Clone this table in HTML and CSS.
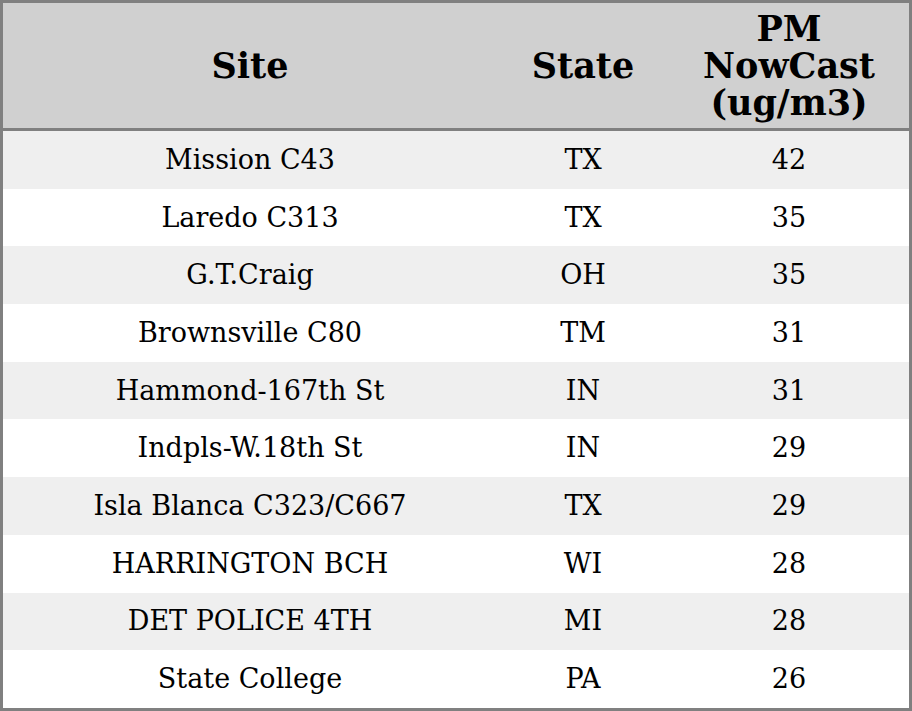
FILE: index.html
```html
<!DOCTYPE html>
<html>
<head>
<meta charset="utf-8">
<link rel="stylesheet" href="styles.css">
</head>
<body>
<table class="aq">
<thead>
<tr><th class="c-site">Site</th><th class="c-state">State</th><th class="c-pm">PM<br>NowCast<br>(ug/m3)</th></tr>
</thead>
<tbody>
<tr><td>Mission C43</td><td>TX</td><td>42</td></tr>
<tr><td>Laredo C313</td><td>TX</td><td>35</td></tr>
<tr><td>G.T.Craig</td><td>OH</td><td>35</td></tr>
<tr><td>Brownsville C80</td><td>TM</td><td>31</td></tr>
<tr><td>Hammond-167th St</td><td>IN</td><td>31</td></tr>
<tr><td>Indpls-W.18th St</td><td>IN</td><td>29</td></tr>
<tr><td>Isla Blanca C323/C667</td><td>TX</td><td>29</td></tr>
<tr><td>HARRINGTON BCH</td><td>WI</td><td>28</td></tr>
<tr><td>DET POLICE 4TH</td><td>MI</td><td>28</td></tr>
<tr><td>State College</td><td>PA</td><td>26</td></tr>
</tbody>
</table>
</body>
</html>
```
FILE: styles.css
```css
html, body { margin: 0; padding: 0; background: #fff; }
body { font-family: "DejaVu Serif", serif; color: #000; }
.aq {
  width: 912px;
  height: 711px;
  border-collapse: collapse;
  border: 3px solid #808080;
  table-layout: fixed;
}
.aq th {
  background: #d0d0d0;
  font-size: 35px;
  font-weight: bold;
  line-height: 37px;
  height: 125px;
  padding: 0;
  border-bottom: 3px solid #808080;
  text-align: center;
  vertical-align: middle;
}
.c-site { width: 494px; }
.c-state { width: 172px; }
.c-pm { width: 240px; }
.aq td {
  font-size: 27px;
  line-height: 32px;
  text-align: center;
  vertical-align: middle;
  padding: 0;
  height: 57.7px;
}
.aq tbody tr:nth-child(odd) td { background: #efefef; }
```
